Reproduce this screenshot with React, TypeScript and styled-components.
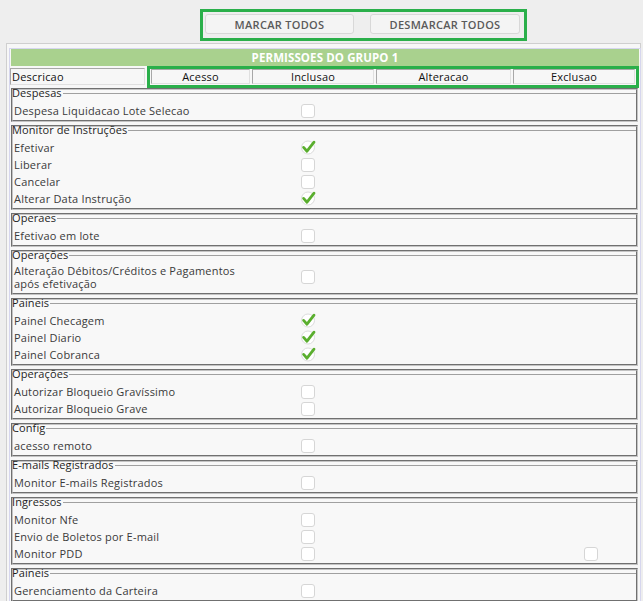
import React from "react";
import styled, { createGlobalStyle } from "styled-components";

const Global = createGlobalStyle`
  html, body { margin: 0; padding: 0; background: #eeeeee; }
  body { font-family: "Open Sans", "DejaVu Sans", sans-serif; }
  * { box-sizing: border-box; }
`;

const Page = styled.div`
  width: 643px;
  display: flex;
  flex-direction: column;
`;

const Toolbar = styled.div`
  display: flex;
  justify-content: flex-start;
  padding: 9px 0 0 200px;
`;

const Highlight = styled.div`
  display: flex;
  gap: 16px;
  border: 3px solid #2aaf4a;
  padding: 2px 4px 4px 2px;
`;

const Button = styled.button<{ $w: number }>`
  width: ${(p) => p.$w}px;
  height: 20px;
  background: #f4f4f4;
  border: 1px solid #d8d8d8;
  border-radius: 3px;
  color: #5a5a5a;
  font-family: "Open Sans", sans-serif;
  font-size: 11px;
  font-weight: 600;
  padding: 0;
  letter-spacing: 0.3px;
`;

const Panel = styled.div`
  margin: 2px 2px 0 6px;
  border: 1px solid #cfcfcf;
  border-bottom: none;
  background: #f7f7f7;
  padding-top: 4px;
`;

const Table = styled.div`
  margin-left: 2px;
  width: 632px;
  border: 1px solid #d6d6ee;
  border-bottom: none;
  padding: 0 1px;
  display: flex;
  flex-direction: column;
`;

const TitleBar = styled.div`
  height: 17px;
  background: #a9d18e;
  color: #fff;
  font-weight: 700;
  font-size: 11.5px;
  line-height: 17px;
  text-align: center;
  letter-spacing: 0.1px;
`;

const HeaderRow = styled.div`
  display: flex;
  align-items: flex-start;
`;

const DescCell = styled.div`
  width: 139px;
  height: 17px;
  margin: 2px 0 0 -1px;
  border: 1px solid #a8a8a8;
  border-right-color: #e0e0e0;
  border-bottom-color: #e0e0e0;
  font-size: 11px;
  line-height: 15px;
  color: #111;
  padding-left: 1px;
  letter-spacing: 0.2px;
`;

const ColsHighlight = styled.div`
  margin-left: 2px;
  flex: 1;
  border: 3px solid #2aaf4a;
  display: flex;
  gap: 2px;
  padding: 0 1px 1px 1px;
`;

const HeadCell = styled.div<{ $w: number }>`
  width: ${(p) => p.$w}px;
  height: 15px;
  border: 1px solid #a8a8a8;
  border-right-color: #e0e0e0;
  border-bottom-color: #e0e0e0;
  font-size: 11px;
  line-height: 13px;
  text-align: center;
  color: #111;
  letter-spacing: 0.2px;
`;

const Groups = styled.div`
  display: flex;
  flex-direction: column;
  gap: 3px;
  padding: 0 1px 0 0;
`;

const Group = styled.div`
  border: 2px groove #c4c4c4;
  background: #f8f8f8;
  display: flex;
  flex-direction: column;
  padding-bottom: 1px;
`;

const LegendRow = styled.div`
  display: flex;
  align-items: center;
  height: 10px;
  margin: -2px 0 4px -1px;
`;

const Legend = styled.span`
  font-size: 11px;
  line-height: 10px;
  color: #1e1e1e;
  padding-right: 1px;
  white-space: nowrap;
  letter-spacing: 0.1px;
`;

const LegendLine = styled.span`
  flex: 1;
  height: 1px;
  background: #a0a0a0;
`;

const Row = styled.div<{ $tall?: boolean }>`
  display: grid;
  grid-template-columns: 287px 14px 269px 14px;
  align-items: center;
  min-height: 17px;
  padding-left: 1px;
  padding-bottom: ${(p) => (p.$tall ? 2 : 0)}px;
`;

const Label = styled.span`
  font-size: 11px;
  line-height: 13px;
  color: #3a3a3a;
  max-width: 240px;
  letter-spacing: 0.2px;
`;

const Box = styled.span`
  display: block;
  width: 14px;
  height: 14px;
  border: 1px solid #d6d6d6;
  border-radius: 3px;
  background: #fff;
`;

const CheckSvg = styled.svg`
  display: block;
  width: 15px;
  height: 15px;
  overflow: visible;
`;

const Check: React.FC<{ on: boolean }> = ({ on }) =>
  on ? (
    <CheckSvg viewBox="0 0 15 15">
      <circle cx="7" cy="7.5" r="6.5" fill="#fff" stroke="#dcdcdc" strokeWidth="1" />
      <path
        d="M2.6 7.4 L6 11.2 L13 2.2"
        fill="none"
        stroke="#5aae2e"
        strokeWidth="2.8"
        strokeLinecap="round"
        strokeLinejoin="round"
      />
    </CheckSvg>
  ) : (
    <Box />
  );

type Item = { label: string; on?: boolean; extra?: boolean };
type G = { title: string; items: Item[] };

const groups: G[] = [
  { title: "Despesas", items: [{ label: "Despesa Liquidacao Lote Selecao" }] },
  {
    title: "Monitor de Instruções",
    items: [
      { label: "Efetivar", on: true },
      { label: "Liberar" },
      { label: "Cancelar" },
      { label: "Alterar Data Instrução", on: true },
    ],
  },
  { title: "Operaes", items: [{ label: "Efetivao em lote" }] },
  {
    title: "Operações",
    items: [{ label: "Alteração Débitos/Créditos e Pagamentos após efetivação" }],
  },
  {
    title: "Paineis",
    items: [
      { label: "Painel Checagem", on: true },
      { label: "Painel Diario", on: true },
      { label: "Painel Cobranca", on: true },
    ],
  },
  {
    title: "Operações",
    items: [{ label: "Autorizar Bloqueio Gravíssimo" }, { label: "Autorizar Bloqueio Grave" }],
  },
  { title: "Config", items: [{ label: "acesso remoto" }] },
  { title: "E-mails Registrados", items: [{ label: "Monitor E-mails Registrados" }] },
  {
    title: "Ingressos",
    items: [
      { label: "Monitor Nfe" },
      { label: "Envio de Boletos por E-mail" },
      { label: "Monitor PDD", extra: true },
    ],
  },
  { title: "Paineis", items: [{ label: "Gerenciamento da Carteira" }] },
];

const heads: [string, number][] = [
  ["Acesso", 99],
  ["Inclusao", 122],
  ["Alteracao", 135],
  ["Exclusao", 122],
];

export default function App() {
  return (
    <Page>
      <Global />
      <Toolbar>
        <Highlight>
          <Button $w={149}>MARCAR TODOS</Button>
          <Button $w={150}>DESMARCAR TODOS</Button>
        </Highlight>
      </Toolbar>
      <Panel>
        <Table>
          <TitleBar>PERMISSOES DO GRUPO 1</TitleBar>
          <HeaderRow>
            <DescCell>Descricao</DescCell>
            <ColsHighlight>
              {heads.map(([h, w]) => (
                <HeadCell key={h} $w={w}>
                  {h}
                </HeadCell>
              ))}
            </ColsHighlight>
          </HeaderRow>
          <Groups>
            {groups.map((g, gi) => (
              <Group key={gi}>
                <LegendRow>
                  <Legend>{g.title}</Legend>
                  <LegendLine />
                </LegendRow>
                {g.items.map((it, ii) => (
                  <Row key={ii} $tall={it.label.length > 40}>
                    <Label>{it.label}</Label>
                    <Check on={!!it.on} />
                    <span />
                    {it.extra ? <Box /> : <span />}
                  </Row>
                ))}
              </Group>
            ))}
          </Groups>
        </Table>
      </Panel>
    </Page>
  );
}
